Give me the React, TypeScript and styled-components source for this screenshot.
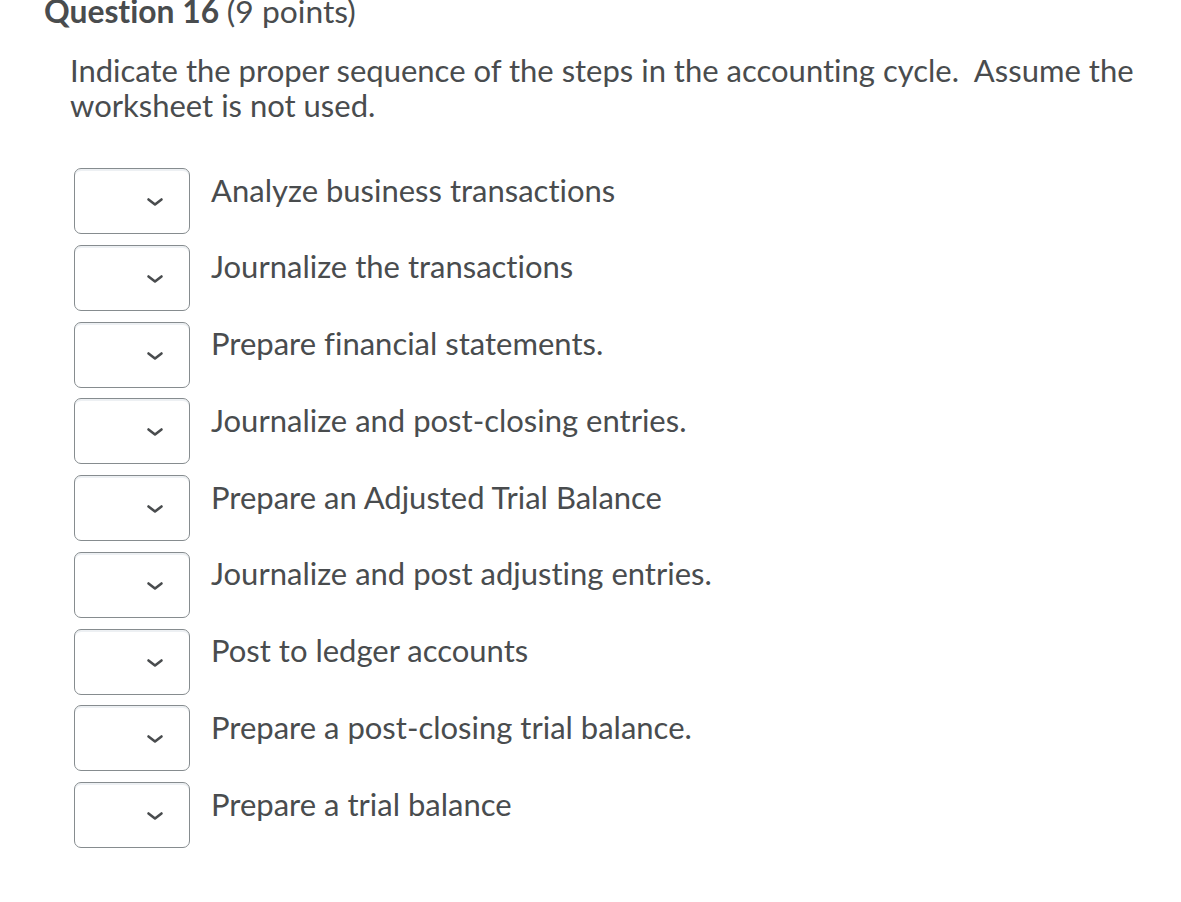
import React from 'react';
import styled, { createGlobalStyle } from 'styled-components';

const GlobalStyle = createGlobalStyle`
  body {
    margin: 0;
    background: #ffffff;
    font-family: Lato, 'Open Sans', sans-serif;
    color: #494c4e;
    font-variant-ligatures: none;
  }
`;

const Page = styled.div`
  padding: 0 0 40px 44px;
`;

const Title = styled.h2`
  margin: -4px 0 0;
  font-size: 31.8px;
  line-height: 30px;
  font-weight: 700;
  color: #494c4e;
  span {
    font-weight: 400;
  }
`;

const Prompt = styled.p`
  margin: 26.5px 0 0 26px;
  font-size: 31px;
  line-height: 35px;
  max-width: 1100px;
`;

const StepList = styled.div`
  display: flex;
  flex-direction: column;
  gap: 10.75px;
  margin: 45.5px 0 0 30px;
`;

const StepRow = styled.div`
  display: flex;
  align-items: flex-start;
  gap: 21px;
`;

const SelectBox = styled.div`
  width: 116px;
  height: 66px;
  box-sizing: border-box;
  border: 1px solid #868c8f;
  border-radius: 7px;
  box-shadow: inset 0 2px 0 0 rgba(185, 194, 208, 0.25);
  display: flex;
  align-items: center;
  justify-content: flex-end;
  padding-right: 25px;
  background: #fff;
`;

const StepText = styled.div`
  font-size: 31px;
  line-height: 35px;
  margin-top: 4.5px;
`;

const steps = [
  'Analyze business transactions',
  'Journalize the transactions',
  'Prepare financial statements.',
  'Journalize and post-closing entries.',
  'Prepare an Adjusted Trial Balance',
  'Journalize and post adjusting entries.',
  'Post to ledger accounts',
  'Prepare a post-closing trial balance.',
  'Prepare a trial balance',
];

function Chevron() {
  return (
    <svg width="18" height="10" viewBox="0 0 18 10" style={{ marginTop: 2 }}>
      <path d="M2.5 2.5 L9 7.5 L15.5 2.5" fill="none" stroke="#494c4e" strokeWidth="2.6" strokeLinecap="round" strokeLinejoin="round" />
    </svg>
  );
}

export default function App() {
  return (
    <Page>
      <GlobalStyle />
      <Title>
        Question 16 <span>(9 points)</span>
      </Title>
      <Prompt>
        Indicate the proper sequence of the steps in the accounting cycle.&nbsp; Assume the worksheet is not used.
      </Prompt>
      <StepList>
        {steps.map((s) => (
          <StepRow key={s}>
            <SelectBox>
              <Chevron />
            </SelectBox>
            <StepText>{s}</StepText>
          </StepRow>
        ))}
      </StepList>
    </Page>
  );
}
